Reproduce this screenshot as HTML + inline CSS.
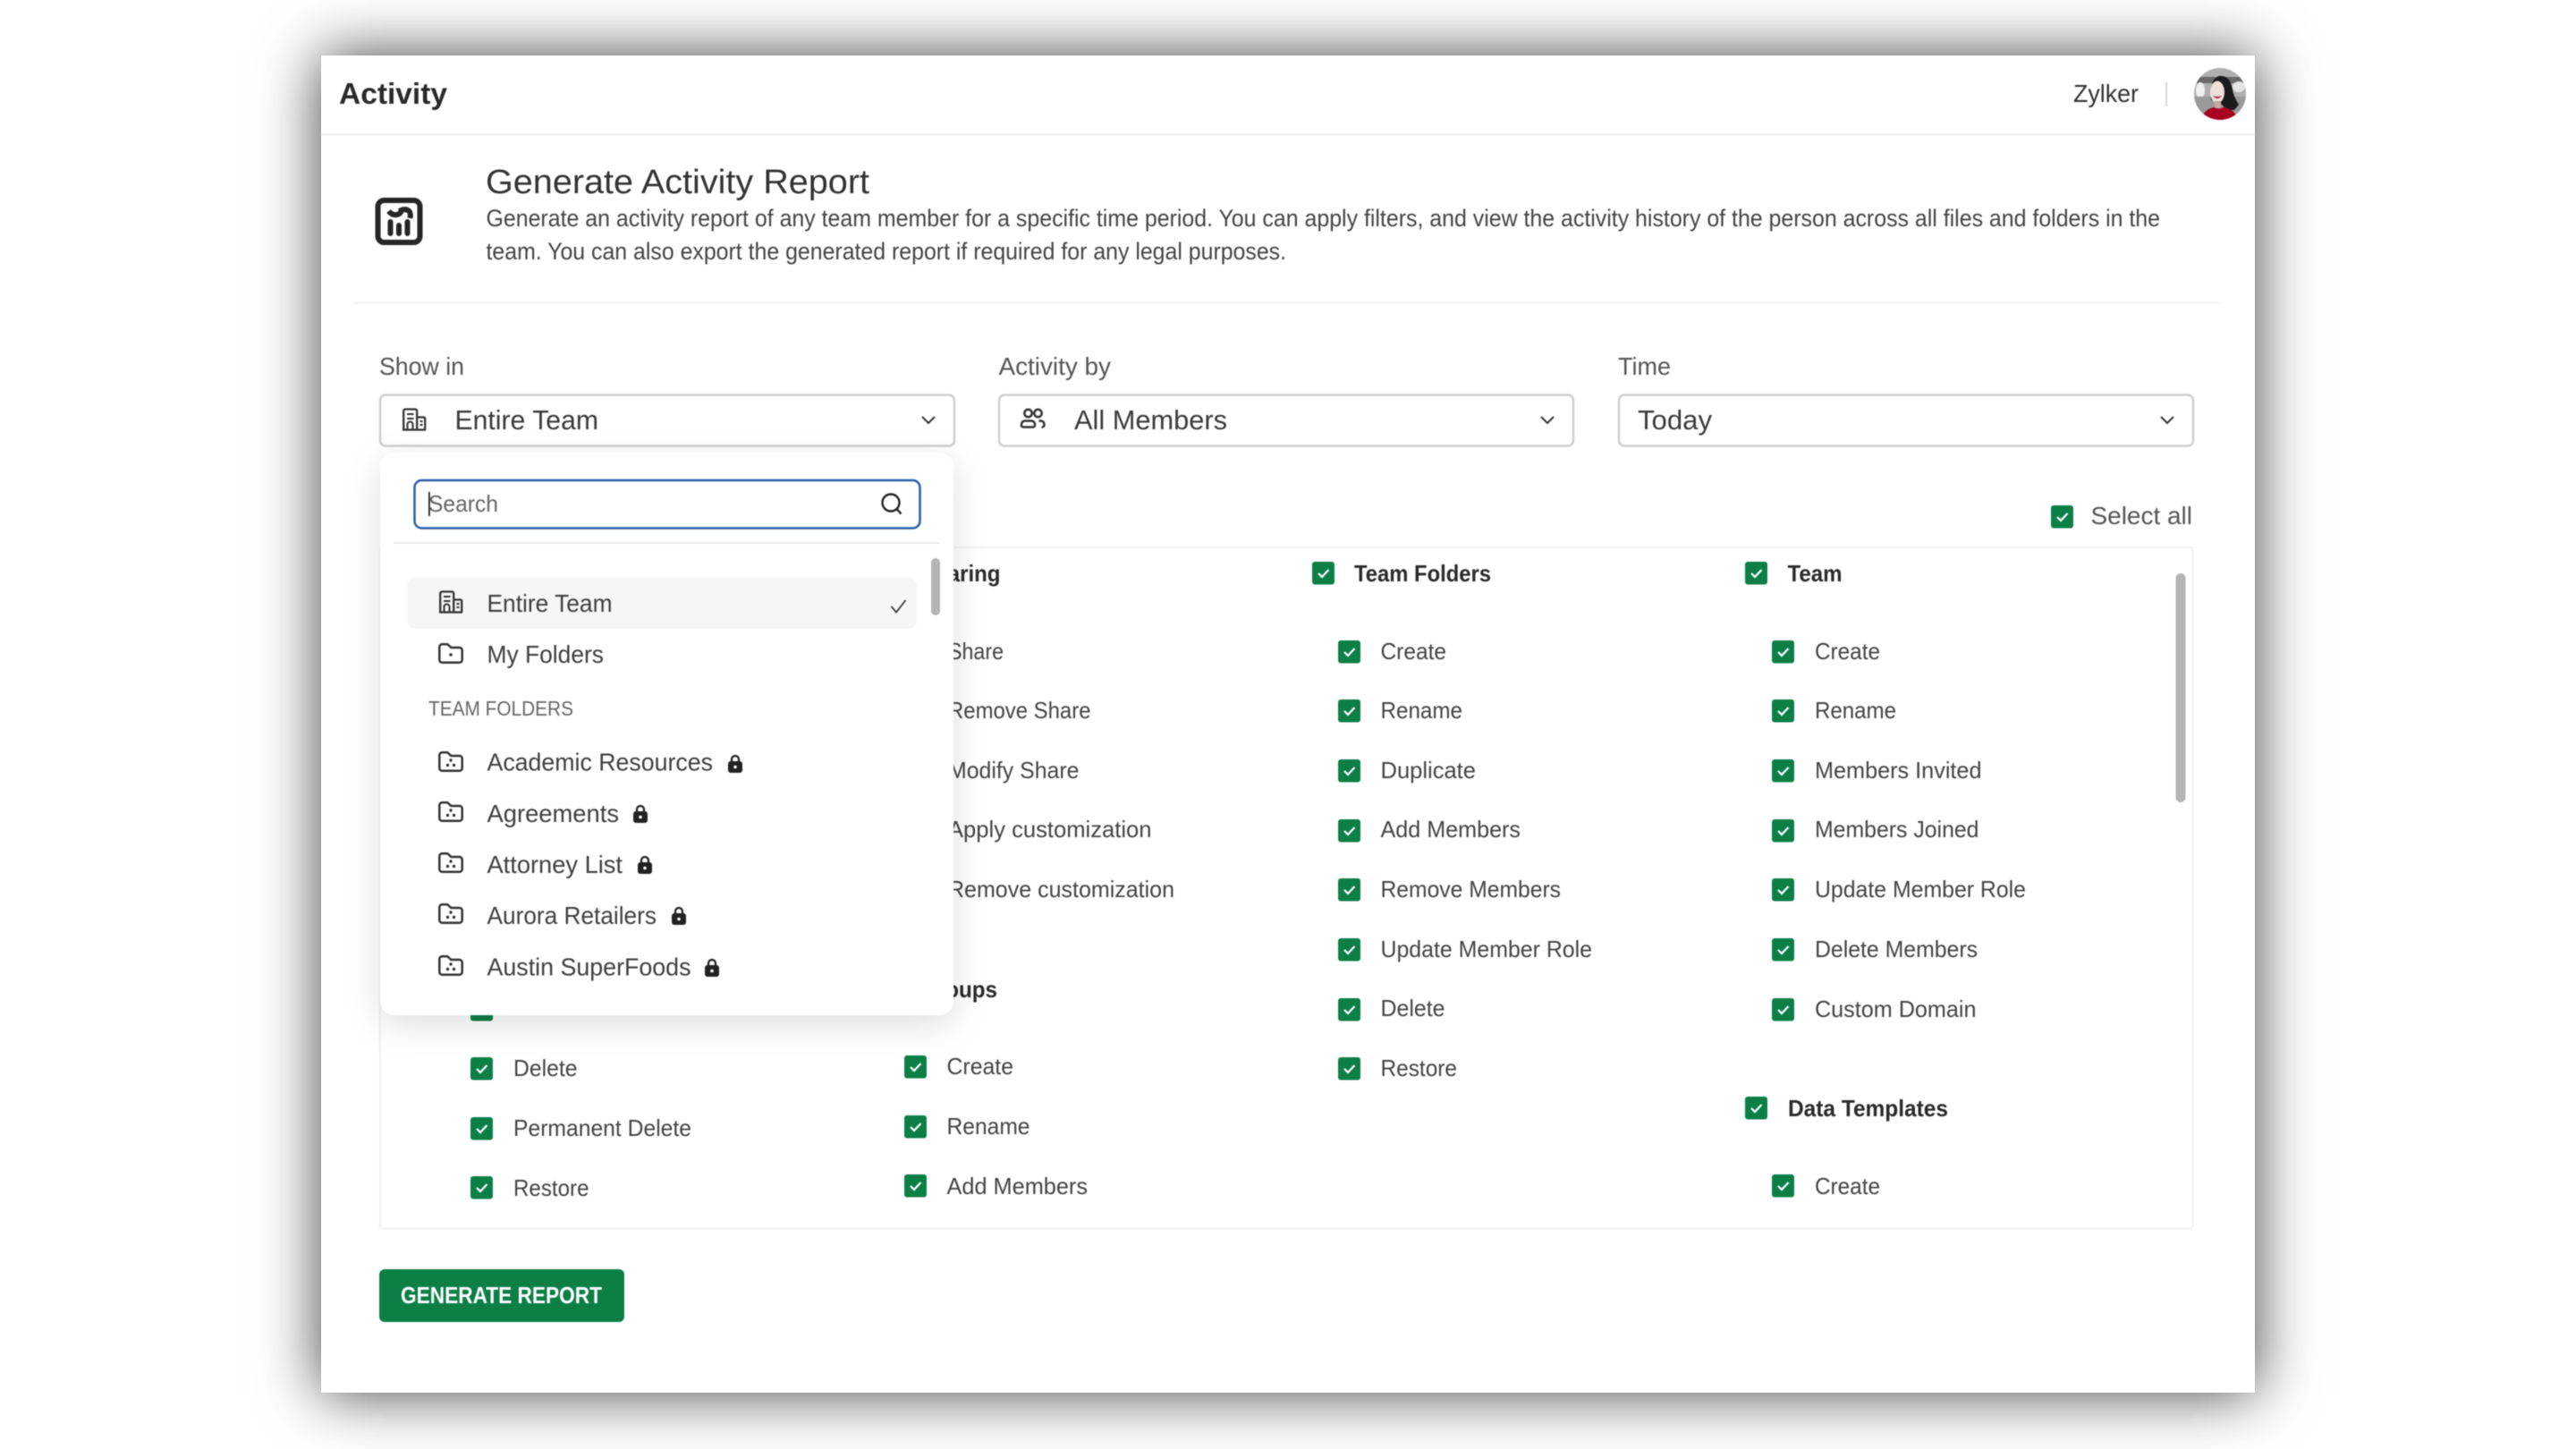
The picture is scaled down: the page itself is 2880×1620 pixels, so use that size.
<!DOCTYPE html>
<html><head><meta charset="utf-8"><title>Activity</title>
<style>
html,body{margin:0;padding:0;background:#fff;width:2880px;height:1620px;overflow:hidden}
#win{position:absolute;left:359px;top:62px;width:2162px;height:1495px;background:#fff;box-shadow:0 0 64px 0 rgba(0,0,0,.74)}
svg{position:absolute;left:0;top:0;filter:blur(.6px)}
text{font-family:"Liberation Sans",sans-serif;fill:#444;font-size:26px}
.b{font-weight:700;fill:#2a2a2a}
.l{font-size:28px;fill:#555}
.s{font-size:31px;fill:#3a3a3a}
.d{font-size:28px;fill:#3f3f3f}
.p{font-size:26.5px;fill:#444}
</style></head><body>
<div id="win"></div>
<svg width="2880" height="1620" viewBox="0 0 2880 1620" xmlns="http://www.w3.org/2000/svg">
<defs>
<symbol id="c" width="25" height="25" viewBox="0 0 25 25" overflow="visible"><rect width="25" height="25.5" rx="3" fill="#0c7f47"/><path d="M7 13l4 4 7.5-8" fill="none" stroke="#fff" stroke-width="2.2"/></symbol>
<symbol id="f" width="28" height="23" viewBox="0 0 28 23" overflow="visible"><path d="M1.3 4.2a3 3 0 0 1 3-3h6l4 3.800h9.400a3 3 0 0 1 3 3v10.800a3 3 0 0 1-3 3H4.300a3 3 0 0 1-3-3z" fill="none" stroke="#333" stroke-width="2.500"/><circle cx="14" cy="10" r="1.700" fill="#333"/><circle cx="10.500" cy="15.500" r="1.700" fill="#333"/><circle cx="17.500" cy="15.500" r="1.700" fill="#333"/></symbol>
<symbol id="k" width="16" height="21" viewBox="0 0 16 21" overflow="visible"><path d="M4 9V6a4 4 0 0 1 8 0v3" fill="none" stroke="#222" stroke-width="2.300"/><rect y="8" width="16" height="13" rx="3" fill="#222"/><circle cx="8" cy="14.500" r="1.800" fill="#fff"/></symbol>
<symbol id="bd" width="26" height="24" viewBox="0 0 26 24" overflow="visible"><path d="M1.200 23.500V2.500a2 2 0 0 1 2-2h11a2 2 0 0 1 2 2v21M16.200 9.500h7.500a1.500 1.500 0 0 1 1.500 1.500v12.500M0 23.500h26" fill="none" stroke="#333" stroke-width="2.300"/><path d="M5 6h7.500M5 11h7.500M5.500 23v-5.500a3 3 0 0 1 6 0V23M19.500 14h3M19.500 18h3" fill="none" stroke="#333" stroke-width="2"/></symbol>
<clipPath id="av"><circle cx="2482" cy="105" r="29"/></clipPath>
<filter id="ds" x="-15%" y="-15%" width="130%" height="130%"><feDropShadow dx="0" dy="10" stdDeviation="18" flood-color="#000" flood-opacity=".13"/></filter>
</defs>

<!-- header -->
<text class="b" x="379" y="116" style="font-size:33px" textLength="121" lengthAdjust="spacingAndGlyphs">Activity</text>
<text x="2318" y="114" style="font-size:28px;fill:#333" textLength="73" lengthAdjust="spacingAndGlyphs">Zylker</text>
<rect x="2421" y="92" width="2" height="27" fill="#d8d8d8"/>
<g clip-path="url(#av)">
<rect x="2453" y="76" width="58" height="58" fill="#b0b0b0"/>
<rect x="2453" y="86" width="58" height="7" fill="#6a6a6a"/>
<ellipse cx="2460" cy="101" rx="5" ry="9" fill="#f0f0f0"/>
<ellipse cx="2503" cy="97" rx="7" ry="6" fill="#e4e4e4"/>
<rect x="2453" y="108" width="58" height="26" fill="#9a9a9a"/>
<path d="M2472 112q-2-24 9-27q11-1 14 11q2 12 8 21l-5 6h-8l-8-8z" fill="#1b1b1b"/>
<ellipse cx="2479" cy="103" rx="8" ry="12.500" fill="#efdfdb"/>
<path d="M2474 107q5 6 10 0q-5 2-10 0z" fill="#a02040"/>
<rect x="2476" y="113" width="7" height="8" fill="#c9a79a"/>
<path d="M2461 134q2-11 14-14q5 3 11 0q13 2 16 14z" fill="#a8001e"/>
</g>
<rect x="359" y="149.500" width="2162" height="2" fill="#ececec"/>

<!-- intro -->
<g transform="translate(419.500 221)">
<rect x="3" y="3" width="47" height="47" rx="7" fill="none" stroke="#262626" stroke-width="6"/>
<path d="M15 15q4 5 9 4q5-1 5-5q5-2 9 1q2 3 1 8" fill="none" stroke="#262626" stroke-width="6"/>
<path d="M17 27v13M26.500 31v9M36 27v13" fill="none" stroke="#262626" stroke-width="6" stroke-linecap="round"/>
</g>
<text x="543" y="216" style="font-size:38px;fill:#333" textLength="429" lengthAdjust="spacingAndGlyphs">Generate Activity Report</text>
<text class="p" x="543.500" y="253" textLength="1871.500" lengthAdjust="spacingAndGlyphs">Generate an activity report of any team member for a specific time period. You can apply filters, and view the activity history of the person across all files and folders in the</text>
<text class="p" x="543.500" y="290" textLength="894.500" lengthAdjust="spacingAndGlyphs">team. You can also export the generated report if required for any legal purposes.</text>
<rect x="395" y="337.500" width="2087" height="2" fill="#f2f2f2"/>

<!-- selects -->
<text class="l" x="424" y="419" textLength="95" lengthAdjust="spacingAndGlyphs">Show in</text>
<text class="l" x="1116.500" y="419" textLength="125.500" lengthAdjust="spacingAndGlyphs">Activity by</text>
<text class="l" x="1809" y="419" textLength="59" lengthAdjust="spacingAndGlyphs">Time</text>
<g fill="#fff" stroke="#cfcfcf" stroke-width="2.500">
<rect x="425" y="441.500" width="642" height="57" rx="6"/>
<rect x="1117" y="441.500" width="642" height="57" rx="6"/>
<rect x="1810" y="441.500" width="642" height="57" rx="6"/>
</g>
<use href="#bd" x="450" y="457"/>
<text class="s" x="508.500" y="480" textLength="160.500" lengthAdjust="spacingAndGlyphs">Entire Team</text>
<g transform="translate(1140.500 456)" fill="none" stroke="#333" stroke-width="2.500">
<circle cx="9" cy="6" r="4.200"/><circle cx="20" cy="6" r="4.200"/>
<path d="M1.500 19a4 4 0 0 1 4-4.500h7a4 4 0 0 1 4 4.500 2 2 0 0 1-2 2.500h-11a2 2 0 0 1-2-2.500zM21 14.500h2a4 4 0 0 1 4 4.500 2.500 2.500 0 0 1-3 2.500"/>
</g>
<text class="s" x="1201" y="480" textLength="171" lengthAdjust="spacingAndGlyphs">All Members</text>
<text class="s" x="1831" y="480" textLength="83" lengthAdjust="spacingAndGlyphs">Today</text>
<g fill="none" stroke="#333" stroke-width="2">
<path d="M1031 466l7 7 7-7"/><path d="M1723 466l7 7 7-7"/><path d="M2416 466l7 7 7-7"/>
</g>

<!-- select all + panel -->
<use href="#c" x="2293" y="565"/>
<text class="l" x="2337.500" y="586" textLength="113.500" lengthAdjust="spacingAndGlyphs">Select all</text>
<rect x="425" y="612" width="2026.500" height="761.500" rx="3" fill="#fff" stroke="#f1f1f1" stroke-width="2"/>
<rect x="2432.500" y="641" width="11" height="256" rx="5.500" fill="#b4b4b4"/>

<!-- col 1 -->
<use href="#c" x="526" y="1116"/>
<use href="#c" x="526" y="1182"/><text x="574" y="1203" textLength="71.500" lengthAdjust="spacingAndGlyphs">Delete</text>
<use href="#c" x="526" y="1249"/><text x="574" y="1270" textLength="199" lengthAdjust="spacingAndGlyphs">Permanent Delete</text>
<use href="#c" x="526" y="1315"/><text x="574" y="1337" textLength="84.500" lengthAdjust="spacingAndGlyphs">Restore</text>

<!-- col 2 -->
<text class="b" x="1029" y="650" textLength="89.500" lengthAdjust="spacingAndGlyphs">Sharing</text>
<text x="1060" y="737" textLength="62" lengthAdjust="spacingAndGlyphs">Share</text>
<text x="1060" y="803" textLength="159.500" lengthAdjust="spacingAndGlyphs">Remove Share</text>
<text x="1060" y="870" textLength="146.500" lengthAdjust="spacingAndGlyphs">Modify Share</text>
<text x="1060" y="936" textLength="227.500" lengthAdjust="spacingAndGlyphs">Apply customization</text>
<text x="1060" y="1003" textLength="253" lengthAdjust="spacingAndGlyphs">Remove customization</text>
<text class="b" x="1029" y="1115" textLength="86" lengthAdjust="spacingAndGlyphs">Groups</text>
<use href="#c" x="1011" y="1180"/><text x="1058.500" y="1201" textLength="74.500" lengthAdjust="spacingAndGlyphs">Create</text>
<use href="#c" x="1011" y="1247"/><text x="1058.500" y="1268" textLength="93" lengthAdjust="spacingAndGlyphs">Rename</text>
<use href="#c" x="1011" y="1313"/><text x="1058.500" y="1335" textLength="157.500" lengthAdjust="spacingAndGlyphs">Add Members</text>

<!-- col 3 -->
<use href="#c" x="1467" y="628"/><text class="b" x="1514" y="650" textLength="153" lengthAdjust="spacingAndGlyphs">Team Folders</text>
<use href="#c" x="1496" y="716"/><text x="1543.500" y="737" textLength="73.500" lengthAdjust="spacingAndGlyphs">Create</text>
<use href="#c" x="1496" y="782"/><text x="1543.500" y="803" textLength="91.500" lengthAdjust="spacingAndGlyphs">Rename</text>
<use href="#c" x="1496" y="849"/><text x="1543.500" y="870" textLength="106.500" lengthAdjust="spacingAndGlyphs">Duplicate</text>
<use href="#c" x="1496" y="916"/><text x="1543.500" y="936" textLength="156.500" lengthAdjust="spacingAndGlyphs">Add Members</text>
<use href="#c" x="1496" y="982"/><text x="1543.500" y="1003" textLength="201.500" lengthAdjust="spacingAndGlyphs">Remove Members</text>
<use href="#c" x="1496" y="1049"/><text x="1543.500" y="1070" textLength="236.500" lengthAdjust="spacingAndGlyphs">Update Member Role</text>
<use href="#c" x="1496" y="1116"/><text x="1543.500" y="1136" textLength="72" lengthAdjust="spacingAndGlyphs">Delete</text>
<use href="#c" x="1496" y="1182"/><text x="1543.500" y="1203" textLength="85.500" lengthAdjust="spacingAndGlyphs">Restore</text>

<!-- col 4 -->
<use href="#c" x="1951" y="628"/><text class="b" x="1998.500" y="650" textLength="61" lengthAdjust="spacingAndGlyphs">Team</text>
<use href="#c" x="1981" y="716"/><text x="2029" y="737" textLength="73" lengthAdjust="spacingAndGlyphs">Create</text>
<use href="#c" x="1981" y="782"/><text x="2029" y="803" textLength="91" lengthAdjust="spacingAndGlyphs">Rename</text>
<use href="#c" x="1981" y="849"/><text x="2029" y="870" textLength="186.500" lengthAdjust="spacingAndGlyphs">Members Invited</text>
<use href="#c" x="1981" y="916"/><text x="2029" y="936" textLength="183.500" lengthAdjust="spacingAndGlyphs">Members Joined</text>
<use href="#c" x="1981" y="982"/><text x="2029" y="1003" textLength="236" lengthAdjust="spacingAndGlyphs">Update Member Role</text>
<use href="#c" x="1981" y="1049"/><text x="2029" y="1070" textLength="182" lengthAdjust="spacingAndGlyphs">Delete Members</text>
<use href="#c" x="1981" y="1116"/><text x="2029" y="1137" textLength="180.500" lengthAdjust="spacingAndGlyphs">Custom Domain</text>
<use href="#c" x="1951" y="1226"/><text class="b" x="1999" y="1248" textLength="179" lengthAdjust="spacingAndGlyphs">Data Templates</text>
<use href="#c" x="1981" y="1313"/><text x="2029" y="1335" textLength="73" lengthAdjust="spacingAndGlyphs">Create</text>

<!-- button -->
<rect x="424" y="1419" width="274" height="59" rx="6" fill="#0c7f47"/>
<text x="448" y="1457" style="font-size:25.5px;font-weight:700;fill:#fff" textLength="225" lengthAdjust="spacingAndGlyphs">GENERATE REPORT</text>

<!-- dropdown -->
<rect x="425" y="506" width="641" height="629" rx="16" fill="#fff" filter="url(#ds)"/>
<rect x="463.500" y="537" width="565" height="53.500" rx="8" fill="#fff" stroke="#2a5dab" stroke-width="2.500"/>
<text x="479" y="572" style="font-size:26px;fill:#666" textLength="78" lengthAdjust="spacingAndGlyphs">Search</text>
<rect x="479" y="550" width="1.800" height="27" fill="#222"/>
<circle cx="996" cy="562" r="9.500" fill="none" stroke="#222" stroke-width="2.400"/>
<path d="M1002.500 569l5 5.500" stroke="#222" stroke-width="2.400" fill="none"/>
<rect x="440" y="606" width="611" height="2" fill="#ececec"/>
<rect x="1041" y="624" width="10" height="64" rx="5" fill="#b4b4b4"/>
<rect x="455.500" y="646" width="569.500" height="57" rx="8" fill="#f6f6f6"/>
<use href="#bd" x="491" y="661"/>
<text class="d" x="544.500" y="684" textLength="140" lengthAdjust="spacingAndGlyphs">Entire Team</text>
<path d="M996.500 678l5.500 6.500 10.500-13.500" fill="none" stroke="#333" stroke-width="1.700"/>
<g transform="translate(490 719)"><path d="M1.300 4.200a3 3 0 0 1 3-3h6l4 3.800h9.400a3 3 0 0 1 3 3v10.800a3 3 0 0 1-3 3H4.300a3 3 0 0 1-3-3z" fill="none" stroke="#333" stroke-width="2.500"/><circle cx="14" cy="13" r="1.800" fill="#333"/></g>
<text class="d" x="544.500" y="741" textLength="130.500" lengthAdjust="spacingAndGlyphs">My Folders</text>
<text x="479" y="800" style="font-size:23.500px;fill:#666" textLength="162" lengthAdjust="spacingAndGlyphs">TEAM FOLDERS</text>

<use href="#f" x="490" y="840"/><text class="d" x="544.500" y="861.500" textLength="252.500" lengthAdjust="spacingAndGlyphs">Academic Resources</text><use href="#k" x="814" y="843"/>
<use href="#f" x="490" y="896"/><text class="d" x="544.500" y="919" textLength="147.500" lengthAdjust="spacingAndGlyphs">Agreements</text><use href="#k" x="708" y="899"/>
<use href="#f" x="490" y="953"/><text class="d" x="544.500" y="976" textLength="151.500" lengthAdjust="spacingAndGlyphs">Attorney List</text><use href="#k" x="713" y="956"/>
<use href="#f" x="490" y="1010"/><text class="d" x="544.500" y="1033" textLength="189.500" lengthAdjust="spacingAndGlyphs">Aurora Retailers</text><use href="#k" x="751" y="1013"/>
<use href="#f" x="490" y="1068"/><text class="d" x="544.500" y="1090.500" textLength="228" lengthAdjust="spacingAndGlyphs">Austin SuperFoods</text><use href="#k" x="788" y="1071"/>
</svg>
</body></html>
